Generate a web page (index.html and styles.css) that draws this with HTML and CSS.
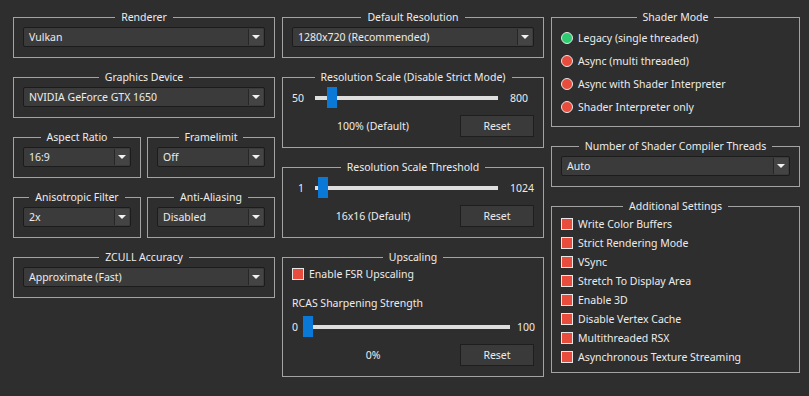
FILE: index.html
```html
<!DOCTYPE html>
<html lang="en">
<head>
  <meta charset="UTF-8" />
  <meta name="viewport" content="width=device-width, initial-scale=1.0" />
  <title>GPU Settings</title>
  <link rel="stylesheet" href="styles.css">
</head>
<body>
  <div class="settings">

    <!-- Left column: renderer and device options -->
    <div class="column">
      <fieldset class="group">
        <legend>Renderer</legend>
        <div class="combo"><span class="combo-value">Vulkan</span><span class="combo-arrow"></span></div>
      </fieldset>
      <fieldset class="group">
        <legend>Graphics Device</legend>
        <div class="combo"><span class="combo-value">NVIDIA GeForce GTX 1650</span><span class="combo-arrow"></span></div>
      </fieldset>
      <div class="pair">
        <fieldset class="group">
          <legend>Aspect Ratio</legend>
          <div class="combo"><span class="combo-value">16:9</span><span class="combo-arrow"></span></div>
        </fieldset>
        <fieldset class="group">
          <legend>Framelimit</legend>
          <div class="combo"><span class="combo-value">Off</span><span class="combo-arrow"></span></div>
        </fieldset>
      </div>
      <div class="pair">
        <fieldset class="group">
          <legend>Anisotropic Filter</legend>
          <div class="combo"><span class="combo-value">2x</span><span class="combo-arrow"></span></div>
        </fieldset>
        <fieldset class="group">
          <legend>Anti-Aliasing</legend>
          <div class="combo"><span class="combo-value">Disabled</span><span class="combo-arrow"></span></div>
        </fieldset>
      </div>
      <fieldset class="group">
        <legend>ZCULL Accuracy</legend>
        <div class="combo"><span class="combo-value">Approximate (Fast)</span><span class="combo-arrow"></span></div>
      </fieldset>
    </div>

    <!-- Middle column: resolution -->
    <div class="column column-mid">
      <fieldset class="group">
        <legend>Default Resolution</legend>
        <div class="combo"><span class="combo-value">1280x720 (Recommended)</span><span class="combo-arrow"></span></div>
      </fieldset>
      <fieldset class="group">
        <legend>Resolution Scale (Disable Strict Mode)</legend>
        <div class="slider">
          <span class="slider-min">50</span>
          <div class="slider-track"><span class="slider-thumb" style="--pos: 0.0667"></span></div>
          <span class="slider-max">800</span>
        </div>
        <div class="slider-footer">
          <span class="slider-value">100% (Default)</span>
          <button class="btn">Reset</button>
        </div>
      </fieldset>
      <fieldset class="group">
        <legend>Resolution Scale Threshold</legend>
        <div class="slider">
          <span class="slider-min">1</span>
          <div class="slider-track"><span class="slider-thumb" style="--pos: 0.0147"></span></div>
          <span class="slider-max">1024</span>
        </div>
        <div class="slider-footer">
          <span class="slider-value">16x16 (Default)</span>
          <button class="btn">Reset</button>
        </div>
      </fieldset>
      <fieldset class="group">
        <legend>Upscaling</legend>
        <label class="check check-single"><span class="check-box"></span>Enable FSR Upscaling</label>
        <div class="field-label">RCAS Sharpening Strength</div>
        <div class="slider slider-wide">
          <span class="slider-min">0</span>
          <div class="slider-track"><span class="slider-thumb" style="--pos: 0"></span></div>
          <span class="slider-max">100</span>
        </div>
        <div class="slider-footer">
          <span class="slider-value">0%</span>
          <button class="btn">Reset</button>
        </div>
      </fieldset>
    </div>

    <!-- Right column: shaders and extras -->
    <div class="column column-right">
      <fieldset class="group group-radios">
        <legend>Shader Mode</legend>
        <label class="radio"><span class="radio-dot on"></span>Legacy (single threaded)</label>
        <label class="radio"><span class="radio-dot"></span>Async (multi threaded)</label>
        <label class="radio"><span class="radio-dot"></span>Async with Shader Interpreter</label>
        <label class="radio"><span class="radio-dot"></span>Shader Interpreter only</label>
      </fieldset>
      <fieldset class="group">
        <legend>Number of Shader Compiler Threads</legend>
        <div class="combo"><span class="combo-value">Auto</span><span class="combo-arrow"></span></div>
      </fieldset>
      <fieldset class="group group-checks">
        <legend>Additional Settings</legend>
        <label class="check"><span class="check-box"></span>Write Color Buffers</label>
        <label class="check"><span class="check-box"></span>Strict Rendering Mode</label>
        <label class="check"><span class="check-box"></span>VSync</label>
        <label class="check"><span class="check-box"></span>Stretch To Display Area</label>
        <label class="check"><span class="check-box"></span>Enable 3D</label>
        <label class="check"><span class="check-box"></span>Disable Vertex Cache</label>
        <label class="check"><span class="check-box"></span>Multithreaded RSX</label>
        <label class="check"><span class="check-box"></span>Asynchronous Texture Streaming</label>
      </fieldset>
    </div>

  </div>
</body>
</html>
```

FILE: styles.css
```css
/* Reset and base */
* { box-sizing: border-box; margin: 0; padding: 0; }
body { background: #2e2e2e; color: #ececec; font-family: "Noto Sans", sans-serif; font-size: 10.5px; line-height: 16px; }

/* Three column layout */
.settings { display: flex; padding: 9px 0 0 13px; }
.column { display: flex; flex-direction: column; gap: 11px; width: 262px; }
.column-mid { margin: 0 7px; }
.column-right { width: 249px; }
.pair { display: grid; grid-template-columns: 1fr 1fr; gap: 6px; }

/* Group boxes */
.group { border: 1px solid #a3a3a3; padding: 2px 9px 10px; min-width: 0; }
.group legend { margin: 0 auto; padding: 0 6px; line-height: 16px; }
.group-radios { padding: 1px 9px 8px; }
.group-checks { padding: 0 9px 6px; }

/* Combo boxes */
.combo { display: flex; height: 20px; background: #3b3b3b; border: 1px solid #1c1c1c; border-radius: 2px; }
.combo-value { flex: 1; padding-left: 5px; line-height: 18px; white-space: nowrap; overflow: hidden; }
.combo-arrow { width: 15px; margin: 1px; border-left: 1px solid #262626; background: #444; display: flex; align-items: center; justify-content: center; }
.combo-arrow::after { content: ''; border-left: 4px solid transparent; border-right: 4px solid transparent; border-top: 4px solid #f2f2f2; }

/* Sliders */
.slider { display: flex; align-items: center; height: 21px; }
.slider-min { width: 12px; text-align: right; margin-right: 11px; }
.slider-max { width: 24px; margin-left: 12px; }
.slider-wide .slider-min { width: 7px; text-align: left; margin-right: 4px; }
.slider-wide .slider-max { width: 17px; margin-left: 7px; }
.slider-track { flex: 1; height: 21px; position: relative; background: linear-gradient(#dedede, #dedede) center / 100% 4px no-repeat; }
.slider-thumb { position: absolute; top: 0; left: calc((100% - 10px) * var(--pos)); width: 10px; height: 21px; background: #0a78d7; }

.slider-footer { display: flex; align-items: center; gap: 6px; margin-top: 7px; }
.slider-value { flex: 1; text-align: center; }
.btn { width: 74px; height: 22px; background: #3a3a3a; border: 1px solid #1e1e1e; color: #ececec; font: inherit; }

/* Checkboxes and radios */
.check, .radio { display: flex; align-items: center; gap: 5px; white-space: nowrap; }
.check { height: 19px; }
.radio { height: 23px; }
.check-box { width: 12px; height: 12px; background: #e74c3c; border: 1px solid #e6e6e6; }
.radio-dot { width: 12px; height: 12px; border-radius: 50%; background: #e74c3c; border: 1px solid #e6e6e6; }
.radio-dot.on { background: #2ecc71; }

/* Upscaling extras */
.check-single { height: 14px; }
.field-label { margin: 14px 0 5px; }
```
